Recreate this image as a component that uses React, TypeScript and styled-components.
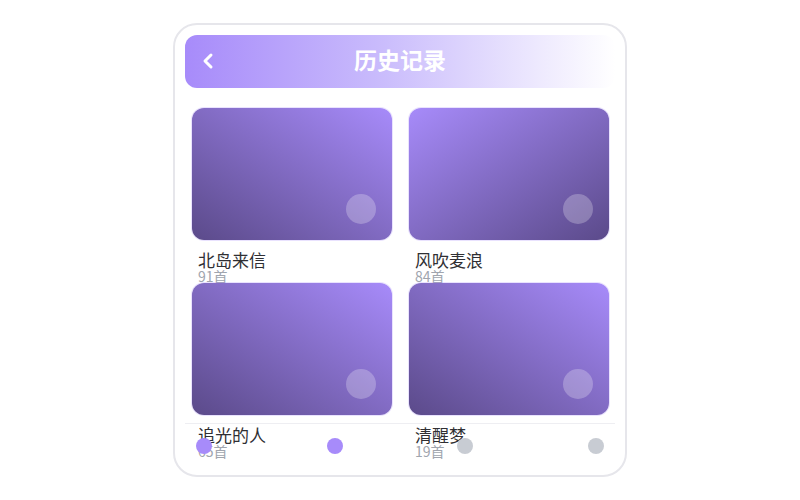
import React from 'react';
import styled, { createGlobalStyle } from 'styled-components';
import { ChevronLeft } from 'lucide-react';

const GlobalStyle = createGlobalStyle`
    html, body {
        margin: 0;
        padding: 0;
        background: #ffffff;
        font-family: "Noto Sans CJK SC", "Noto Sans", sans-serif;
    }
`;

const Page = styled.div`
    width: 800px;
    height: 500px;
    display: flex;
    align-items: center;
    justify-content: center;
`;

const Frame = styled.div`
    position: relative;
    box-sizing: border-box;
    width: 454px;
    height: 454px;
    padding: 10px;
    border: 2px solid #e6e6eb;
    border-radius: 24px;
    background: #ffffff;
    display: flex;
    flex-flow: column nowrap;
`;

const Header = styled.div`
    position: relative;
    flex-shrink: 0;
    height: 53px;
    border-radius: 12px;
    background: linear-gradient(90deg, #a78bfa 0%, #c9bbfc 45%, #ffffff 100%);
    display: flex;
    align-items: center;
`;

const BackBtn = styled.div`
    width: 24px;
    height: 24px;
    margin-left: 11px;
    margin-top: -2px;
    color: #ffffff;
    display: flex;
    align-items: center;
    justify-content: center;
`;

const Title = styled.h1`
    position: absolute;
    left: 0;
    right: 0;
    top: 50%;
    transform: translateY(-62%);
    margin: 0;
    text-align: center;
    font-size: 23px;
    line-height: 1;
    font-weight: 700;
    color: #ffffff;
    pointer-events: none;
`;

const Grid = styled.div`
    display: grid;
    grid-template-columns: 1fr 1fr;
    column-gap: 17px;
    padding: 20px 6px 0 7px;
`;

const Item = styled.div`
    display: flex;
    flex-flow: column nowrap;
`;

const Cover = styled.div<{ $dir: string }>`
    position: relative;
    height: 132px;
    border-radius: 12px;
    background: linear-gradient(${p => p.$dir}, #a78bfa 0%, #5b4a8a 100%);
    box-shadow: 0 0 0 1px rgba(167, 139, 250, 0.25);
`;

const PlayDot = styled.div`
    position: absolute;
    right: 16px;
    bottom: 16px;
    width: 30px;
    height: 30px;
    border-radius: 50%;
    background: rgba(255, 255, 255, 0.25);
`;

const Name = styled.div`
    margin-top: 10px;
    padding-left: 6px;
    font-size: 17px;
    line-height: 19px;
    color: #2f2f33;
`;

const Count = styled.div`
    padding-left: 6px;
    font-size: 14px;
    line-height: 14px;
    color: #a0a5ae;
`;

const TabBar = styled.div`
    position: absolute;
    left: 10px;
    right: 10px;
    bottom: 7px;
    height: 44px;
    border-top: 1px solid #eeeef2;
    display: flex;
    align-items: center;
    justify-content: space-between;
    padding: 0 11px;
`;

const TabDot = styled.div<{ $active?: boolean }>`
    width: 16px;
    height: 16px;
    border-radius: 50%;
    background: ${p => (p.$active ? '#a78bfa' : '#c8ccd3')};
`;

const albums = [
    { name: '北岛来信', count: 91, dir: 'to bottom left' },
    { name: '风吹麦浪', count: 84, dir: 'to bottom right' },
    { name: '追光的人', count: 65, dir: 'to bottom left' },
    { name: '清醒梦', count: 19, dir: 'to bottom left' },
];

export default function App() {
    return (
        <>
            <GlobalStyle />
            <Page>
                <Frame>
                    <Header>
                        <BackBtn>
                            <ChevronLeft size={26} strokeWidth={3} />
                        </BackBtn>
                        <Title>历史记录</Title>
                    </Header>
                    <Grid>
                        {albums.map(a => (
                            <Item key={a.name}>
                                <Cover $dir={a.dir}>
                                    <PlayDot />
                                </Cover>
                                <Name>{a.name}</Name>
                                <Count>{a.count}首</Count>
                            </Item>
                        ))}
                    </Grid>
                    <TabBar>
                        <TabDot $active />
                        <TabDot $active />
                        <TabDot />
                        <TabDot />
                    </TabBar>
                </Frame>
            </Page>
        </>
    );
}
